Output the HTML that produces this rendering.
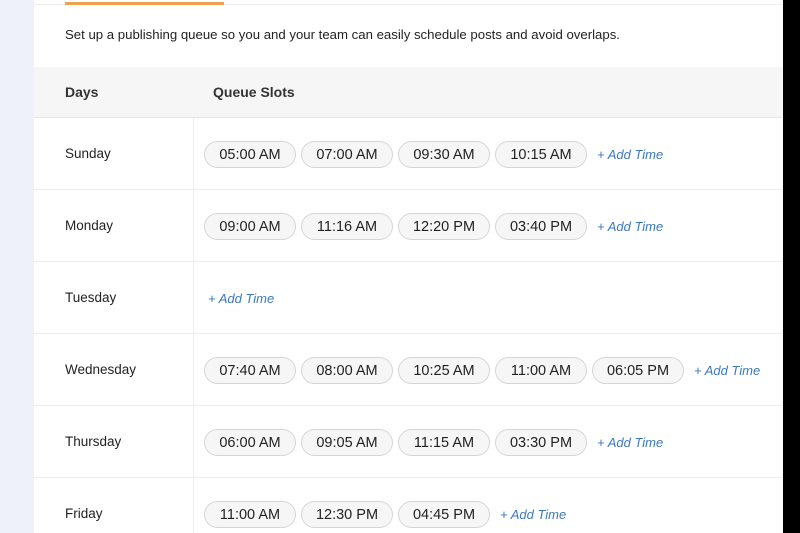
<!DOCTYPE html>
<html><head><style>
*{margin:0;padding:0;box-sizing:border-box}
html,body{width:800px;height:533px;overflow:hidden}
body{background:#eef1fa;font-family:"Liberation Sans",sans-serif;position:relative;color:#222}
.card{position:absolute;left:34px;top:0;width:749px;height:533px;background:#fff;overflow:hidden}
.blk{position:absolute;left:783px;top:0;width:17px;height:533px;background:#000}
.topline{position:absolute;left:0;top:4px;width:749px;height:1px;background:#eee}
.orange{position:absolute;left:31px;top:2px;width:159px;height:3px;background:#f0a050}
.intro{position:absolute;left:31px;top:27px;font-size:13.2px;color:#222}
.head{position:absolute;left:0;top:67px;width:749px;height:51px;background:#f6f6f6;border-bottom:1px solid #e6e6e6}
.head span{position:absolute;top:17px;font-size:14px;font-weight:bold;color:#333}
.vline{position:absolute;left:159px;top:118px;width:1px;height:415px;background:#eee}
.row{position:absolute;left:0;width:749px;height:72px;border-bottom:1px solid #eee}
.day{position:absolute;left:31px;top:28px;font-size:13.5px}
.slots{position:absolute;left:170px;top:22px;display:flex;align-items:center;height:28px}
.pill{width:92px;height:27px;border:1px solid #d6d6d6;border-radius:14px;background:#f6f6f6;font-size:14.5px;text-align:center;line-height:27px;margin-right:5px}
.add{color:#3a78c0;font-style:italic;font-size:13px;margin-left:5px}
</style></head><body>
<div class="card">
<div class="topline"></div><div class="orange"></div>
<div class="intro">Set up a publishing queue so you and your team can easily schedule posts and avoid overlaps.</div>
<div class="head"><span style="left:31px">Days</span><span style="left:179px">Queue Slots</span></div>
<div class="vline"></div>
<div class="row" style="top:118px"><div class="day">Sunday</div><div class="slots"><div class="pill">05:00 AM</div><div class="pill">07:00 AM</div><div class="pill">09:30 AM</div><div class="pill">10:15 AM</div><span class="add">+ Add Time</span></div></div>
<div class="row" style="top:190px"><div class="day">Monday</div><div class="slots"><div class="pill">09:00 AM</div><div class="pill">11:16 AM</div><div class="pill">12:20 PM</div><div class="pill">03:40 PM</div><span class="add">+ Add Time</span></div></div>
<div class="row" style="top:262px"><div class="day">Tuesday</div><div class="slots" style="left:169px"><span class="add">+ Add Time</span></div></div>
<div class="row" style="top:334px"><div class="day">Wednesday</div><div class="slots"><div class="pill">07:40 AM</div><div class="pill">08:00 AM</div><div class="pill">10:25 AM</div><div class="pill">11:00 AM</div><div class="pill">06:05 PM</div><span class="add">+ Add Time</span></div></div>
<div class="row" style="top:406px"><div class="day">Thursday</div><div class="slots"><div class="pill">06:00 AM</div><div class="pill">09:05 AM</div><div class="pill">11:15 AM</div><div class="pill">03:30 PM</div><span class="add">+ Add Time</span></div></div>
<div class="row" style="top:478px"><div class="day">Friday</div><div class="slots"><div class="pill">11:00 AM</div><div class="pill">12:30 PM</div><div class="pill">04:45 PM</div><span class="add">+ Add Time</span></div></div>
</div>
<div class="blk"></div>
</body></html>
